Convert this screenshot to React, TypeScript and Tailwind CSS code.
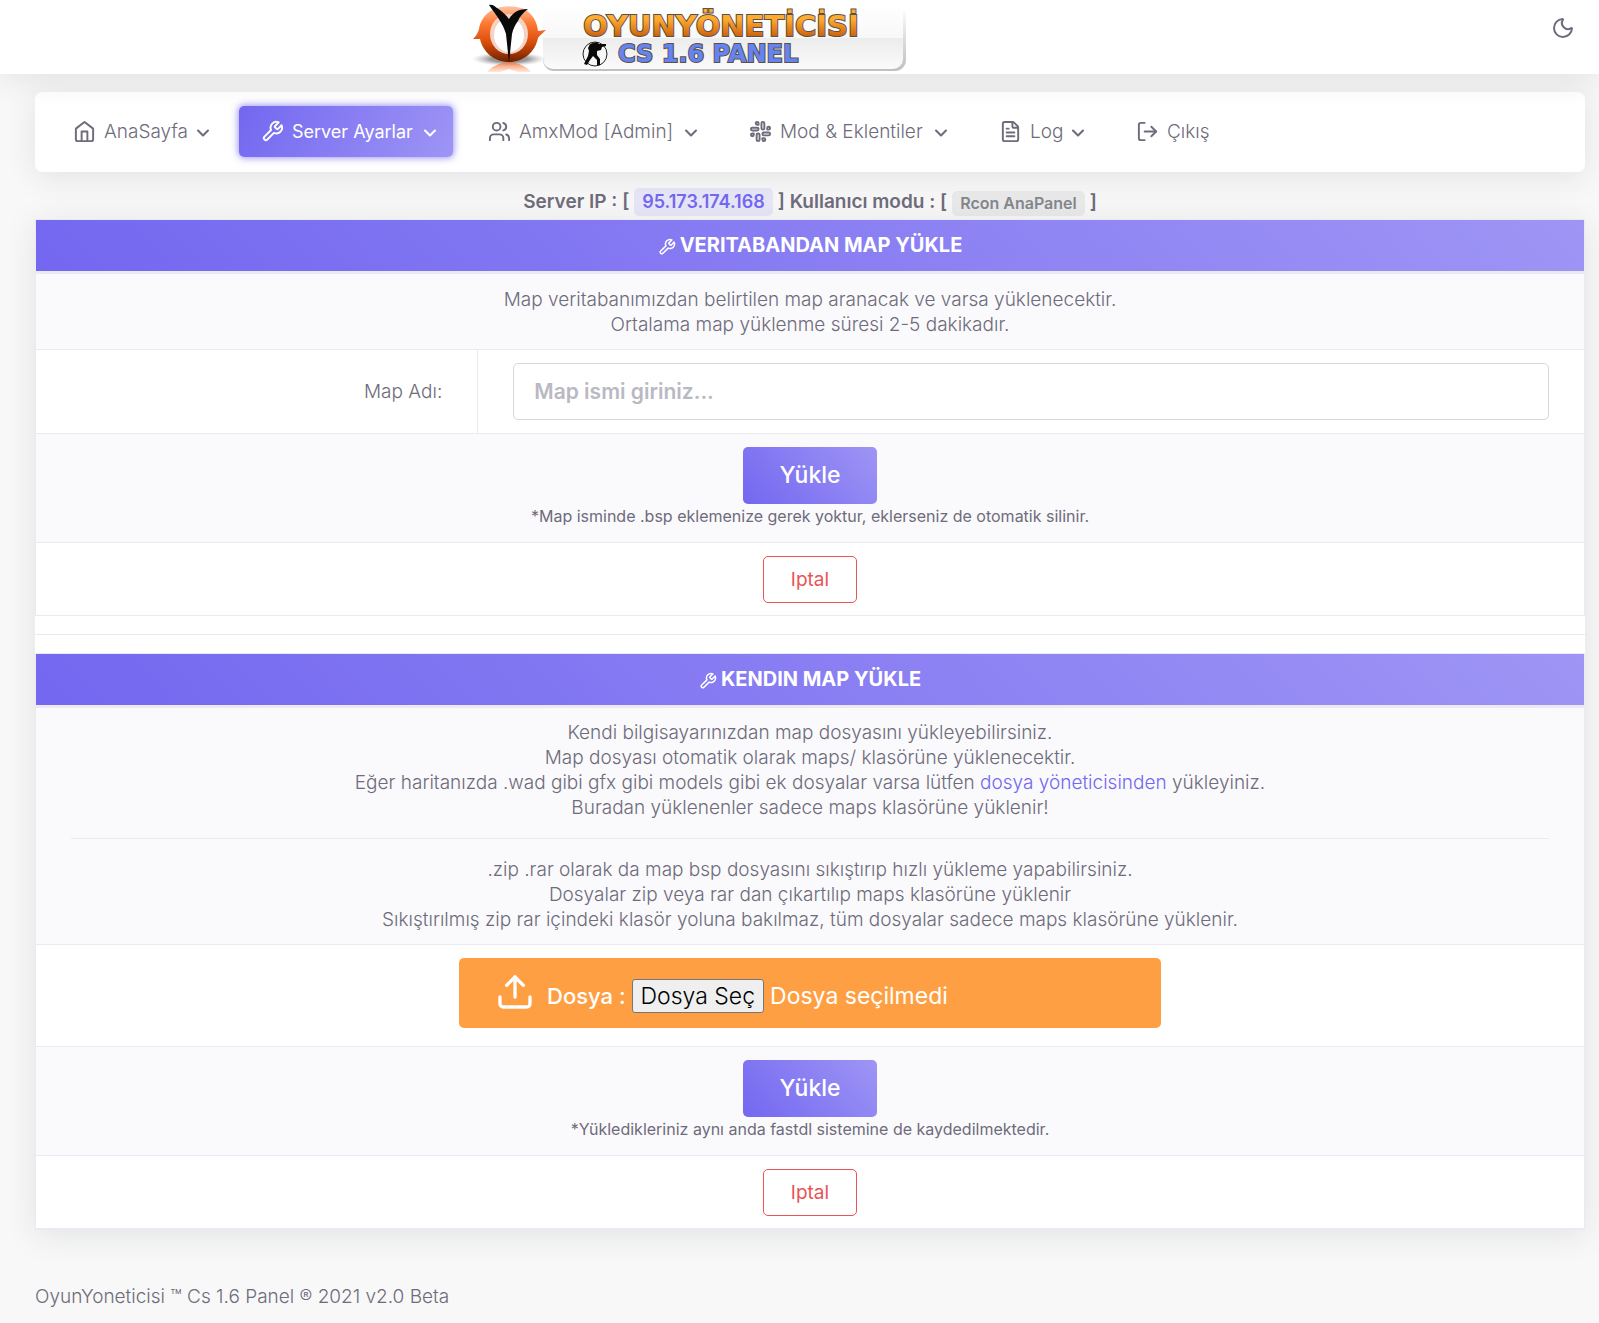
import type { ReactNode } from "react";
import {
  ChevronDown,
  FileText,
  LogOut,
  Moon,
  Slack,
  Upload,
  Users,
  type LucideIcon,
} from "lucide-react";

interface IconProps {
  className?: string;
}

function HomeIcon({ className }: IconProps) {
  return (
    <svg
      viewBox="0 0 24 24"
      fill="none"
      stroke="currentColor"
      strokeWidth="2"
      strokeLinecap="round"
      strokeLinejoin="round"
      className={className}
      aria-hidden="true"
    >
      <path d="M3 9l9-7 9 7v11a2 2 0 0 1-2 2H5a2 2 0 0 1-2-2z" />
      <path d="M9 22V12h6v10" />
    </svg>
  );
}

function ToolIcon({ className }: IconProps) {
  return (
    <svg
      viewBox="0 0 24 24"
      fill="none"
      stroke="currentColor"
      strokeWidth="2"
      strokeLinecap="round"
      strokeLinejoin="round"
      className={className}
      aria-hidden="true"
    >
      <path d="M14.7 6.3a1 1 0 0 0 0 1.4l1.6 1.6a1 1 0 0 0 1.4 0l3.77-3.77a6 6 0 0 1-7.94 7.94l-6.91 6.91a2.12 2.12 0 0 1-3-3l6.91-6.91a6 6 0 0 1 7.94-7.94l-3.76 3.76z" />
    </svg>
  );
}

function Logo() {
  return (
    <svg width="460" height="74" viewBox="0 0 460 74" role="img" aria-label="OyunYöneticisi">
      <defs>
        <linearGradient id="plate" x1="0" y1="0" x2="0" y2="1">
          <stop offset="0" stopColor="#ffffff" />
          <stop offset="0.52" stopColor="#f8f8f8" />
          <stop offset="0.53" stopColor="#ececec" />
          <stop offset="1" stopColor="#fbfbfb" />
        </linearGradient>
        <linearGradient id="plateEdge" x1="0" y1="0" x2="0" y2="1">
          <stop offset="0" stopColor="#ffffff" />
          <stop offset="0.5" stopColor="#dddddd" />
          <stop offset="1" stopColor="#c0c0c0" />
        </linearGradient>
        <linearGradient id="orange" x1="0" y1="0" x2="0" y2="1">
          <stop offset="0.3" stopColor="#ffab2e" />
          <stop offset="0.9" stopColor="#c25408" />
        </linearGradient>
        <linearGradient id="ring" x1="0" y1="0" x2="0" y2="1">
          <stop offset="0" stopColor="#ffc4a3" />
          <stop offset="0.3" stopColor="#ff7a33" />
          <stop offset="0.65" stopColor="#d94d0b" />
          <stop offset="1" stopColor="#6e2200" />
        </linearGradient>
        <linearGradient id="mirror" x1="0" y1="0" x2="0" y2="1">
          <stop offset="0" stopColor="#f27a45" stopOpacity="0.9" />
          <stop offset="1" stopColor="#ff8a50" stopOpacity="0.2" />
        </linearGradient>
        <radialGradient id="ground">
          <stop offset="0.5" stopColor="#555555" stopOpacity="0.6" />
          <stop offset="1" stopColor="#999999" stopOpacity="0" />
        </radialGradient>
      </defs>

      <rect x="83" y="6" width="363" height="65" rx="11" fill="url(#plateEdge)" />
      <rect x="83" y="4" width="360" height="65" rx="10" fill="url(#plate)" />

      {/* emblem */}
      <ellipse cx="49" cy="59" rx="37" ry="7" fill="url(#ground)" />
      <path d="M27 72c5-6 12-9 22-10 10 1 17 4 22 10H58l-9-3-9 3z" fill="url(#mirror)" />
      <path
        d="M32 10C24 15 20 22 19 29c-1 4-3 7-6 10l7 0c3 13 14 23 29 23s26-10 29-24c2-3 4-4 8-8l-8 1C77 22 73 15 66 10 56 5 42 5 32 10z"
        fill="url(#ring)"
      />
      <ellipse cx="49" cy="34" rx="19" ry="20" fill="#f3d3c3" />
      <ellipse cx="49" cy="35" rx="15" ry="17" fill="#ffffff" />
      <path
        d="M29 5c2-1 5 0 8 3 5 3 9 7 12 11 4-6 8-10 19-10-5 4-8 7-10 12-3 4-5 8-6 13l-3 29-3-29C43 23 36 15 29 5z"
        fill="#0a0a0a"
      />

      <g
        fontFamily="'DejaVu Sans', sans-serif"
        fontWeight="700"
        stroke="#5a5048"
        strokeWidth="2"
        paintOrder="stroke"
      >
        <text x="261" y="36" fontSize="29" textAnchor="middle" fill="url(#orange)">
          OYUNYÖNETİCİSİ
        </text>
        <text x="158" y="62" fontSize="24" fill="#6684ee">
          CS 1.6 PANEL
        </text>
      </g>

      <circle cx="135" cy="54" r="12" fill="#f6f6f6" stroke="#222222" strokeWidth="1" />
      <path
        d="M133 43l4-1 2 2 7 0 0 2-4 1-1 3-4 1 0 4 3 4 0 6-3 0 0-5-4-4-3 4-3 5-3-1 4-8 1-5-1-3 2-4z"
        fill="#0a0a0a"
      />
    </svg>
  );
}

interface NavItem {
  label: string;
  icon: LucideIcon | typeof HomeIcon;
  width: string;
  active?: boolean;
  menu?: boolean;
}

const navItems: NavItem[] = [
  { label: "AnaSayfa", icon: HomeIcon, width: "min-w-[175px]", menu: true },
  { label: "Server Ayarlar", icon: ToolIcon, width: "min-w-[214px]", active: true, menu: true },
  { label: "AmxMod [Admin]", icon: Users, width: "min-w-[248px]", menu: true },
  { label: "Mod & Eklentiler", icon: Slack, width: "min-w-[237px]", menu: true },
  { label: "Log", icon: FileText, width: "min-w-[124px]", menu: true },
  { label: "Çıkış", icon: LogOut, width: "min-w-[108px]" },
];

function NavLink({ label, icon: Icon, width, active, menu }: NavItem) {
  return (
    <a
      href="#"
      className={`flex h-[51px] items-center rounded-[5px] pt-px pr-[13px] pl-[22px] ${width} ${
        active
          ? "bg-linear-[118deg,#7367f0,#9e95f5] font-normal text-[18px] text-white shadow-[0_0_7px_1px_rgba(115,103,240,0.7)]"
          : ""
      }`}
    >
      <Icon className="mr-2 size-[23px] shrink-0" />
      <span className="grow whitespace-nowrap">{label}</span>
      {menu && <ChevronDown className="mt-0.5 size-5 shrink-0" strokeWidth={2.5} />}
    </a>
  );
}

interface PanelProps {
  title: string;
  children: ReactNode;
}

function Panel({ title, children }: PanelProps) {
  return (
    <table className="w-full border-separate border-spacing-0 border border-b-0 border-[#ebe9f1] text-center">
      <thead>
        <tr>
          <th
            colSpan={2}
            className="h-[54px] border-[#ebe9f1] border-b-3 bg-linear-[47deg,#7367f0,#9e95f5] bg-origin-border pt-1 text-[20px] text-white"
          >
            <span className="inline-flex items-center gap-1">
              <ToolIcon className="mt-0.5 size-[18px]" />
              {title}
            </span>
          </th>
        </tr>
      </thead>
      <tbody>{children}</tbody>
    </table>
  );
}

function SubmitRow({ note }: { note: string }) {
  return (
    <tr className="h-[109px] bg-[#fafafc]">
      <td colSpan={2} className="border-[#ebe9f1] border-b">
        <button
          type="submit"
          className="h-[57px] w-[134px] rounded-[5px] bg-linear-[47deg,#7367f0,#9e95f5] font-medium text-[23px] text-white"
        >
          Yükle
        </button>
        <p className="font-normal text-[16px]">{note}</p>
      </td>
    </tr>
  );
}

function CancelRow() {
  return (
    <tr className="h-[73px]">
      <td colSpan={2} className="border-[#ebe9f1] border-b">
        <button
          type="button"
          className="h-[47px] w-[94px] rounded-[5px] border border-[#ea5455] pt-px font-normal text-[#ea5455] text-[19px]"
        >
          Iptal
        </button>
      </td>
    </tr>
  );
}

export default function App() {
  return (
    <div className="min-h-screen bg-[#f8f8f8] font-['Inter',sans-serif] font-light text-[#6e6b7b] text-[19px] leading-[25px]">
      <header className="relative z-10 flex h-[74px] justify-between bg-white pr-6 pl-[460px] shadow-[0_5px_30px_rgba(34,41,47,0.1)]">
        <Logo />
        <button type="button" aria-label="Karanlık mod" className="mt-4 h-6">
          <Moon className="size-6" />
        </button>
      </header>

      <div className="pt-[18px] pr-[14px] pb-[14px] pl-[35px]">
        <nav className="flex h-20 items-center gap-[13px] rounded-[7px] bg-white px-4 pb-0.5 shadow-[0_5px_30px_rgba(34,41,47,0.1)]">
          {navItems.map((item) => (
            <NavLink key={item.label} {...item} />
          ))}
        </nav>

        <main>
          <p className="mt-3 flex h-[35px] items-center justify-center gap-[5px] font-semibold text-[19px]">
            <span>Server IP : [</span>
            <span className="rounded-[5px] bg-[#7367f0]/12 px-2 text-[#7367f0] text-[18px] leading-[28px]">
              95.173.174.168
            </span>
            <span>] Kullanıcı modu : [</span>
            <span className="mt-[3px] rounded-[5px] bg-[#82868b]/12 px-2 text-[#82868b] text-[16px]">
              Rcon AnaPanel
            </span>
            <span>]</span>
          </p>

          <div className="border-[#ebe9f1] border-b bg-white shadow-[0_5px_30px_rgba(34,41,47,0.1)]">
            <form>
              <Panel title="VERITABANDAN MAP YÜKLE">
                <tr className="h-[76px] bg-[#fafafc]">
                  <td colSpan={2} className="border-[#ebe9f1] border-b px-[35px]">
                    <p>Map veritabanımızdan belirtilen map aranacak ve varsa yüklenecektir.</p>
                    <p>Ortalama map yüklenme süresi 2-5 dakikadır.</p>
                  </td>
                </tr>
                <tr className="h-[84px]">
                  <td className="w-2/7 border-[#ebe9f1] border-r border-b px-[35px] text-right">
                    <label htmlFor="map">Map Adı:</label>
                  </td>
                  <td className="border-[#ebe9f1] border-b px-[35px]">
                    <input
                      id="map"
                      type="text"
                      placeholder="Map ismi giriniz..."
                      className="block h-[57px] w-full rounded-[5px] border border-[#d8d6de] bg-white px-5 font-semibold text-[21px] placeholder:text-[#b9b9c3]"
                    />
                  </td>
                </tr>
                <SubmitRow note="*Map isminde .bsp eklemenize gerek yoktur, eklerseniz de otomatik silinir." />
                <CancelRow />
              </Panel>
            </form>

            <hr className="my-[18px] border-[#ebe9f1]" />

            <form>
              <Panel title="KENDIN MAP YÜKLE">
                <tr className="h-[237px] bg-[#fafafc]">
                  <td colSpan={2} className="border-[#ebe9f1] border-b px-[35px]">
                    <p>Kendi bilgisayarınızdan map dosyasını yükleyebilirsiniz.</p>
                    <p>Map dosyası otomatik olarak maps/ klasörüne yüklenecektir.</p>
                    <p>
                      Eğer haritanızda .wad gibi gfx gibi models gibi ek dosyalar varsa lütfen{" "}
                      <a href="#" className="text-[#7367f0]">
                        dosya yöneticisinden
                      </a>{" "}
                      yükleyiniz.
                    </p>
                    <p>Buradan yüklenenler sadece maps klasörüne yüklenir!</p>
                    <hr className="my-[18px] border-[#ebe9f1]" />
                    <p>.zip .rar olarak da map bsp dosyasını sıkıştırıp hızlı yükleme yapabilirsiniz.</p>
                    <p>Dosyalar zip veya rar dan çıkartılıp maps klasörüne yüklenir</p>
                    <p>
                      Sıkıştırılmış zip rar içindeki klasör yoluna bakılmaz, tüm dosyalar sadece maps
                      klasörüne yüklenir.
                    </p>
                  </td>
                </tr>
                <tr className="h-[102px]">
                  <td colSpan={2} className="border-[#ebe9f1] border-b px-[35px] pb-[5px]">
                    <label
                      htmlFor="file"
                      className="mx-auto flex h-[70px] w-[702px] max-w-full items-center rounded-[5px] bg-[#ff9f43] pt-[6px] pl-9 text-[23px] text-white"
                    >
                      <Upload className="mr-3 mb-2 size-10" />
                      <span className="mr-[6px] font-medium text-[22px]">Dosya :</span>
                      <input id="file" type="file" className="sr-only" />
                      <span className="mr-[6px] rounded-[3px] border border-[#767676] bg-[#efefef] px-2 text-black leading-[32px]">
                        Dosya Seç
                      </span>
                      <span className="font-normal">Dosya seçilmedi</span>
                    </label>
                  </td>
                </tr>
                <SubmitRow note="*Yükledikleriniz aynı anda fastdl sistemine de kaydedilmektedir." />
                <CancelRow />
              </Panel>
            </form>
          </div>
        </main>

        <footer className="mt-[54px]">OyunYoneticisi ™ Cs 1.6 Panel ® 2021 v2.0 Beta</footer>
      </div>
    </div>
  );
}
